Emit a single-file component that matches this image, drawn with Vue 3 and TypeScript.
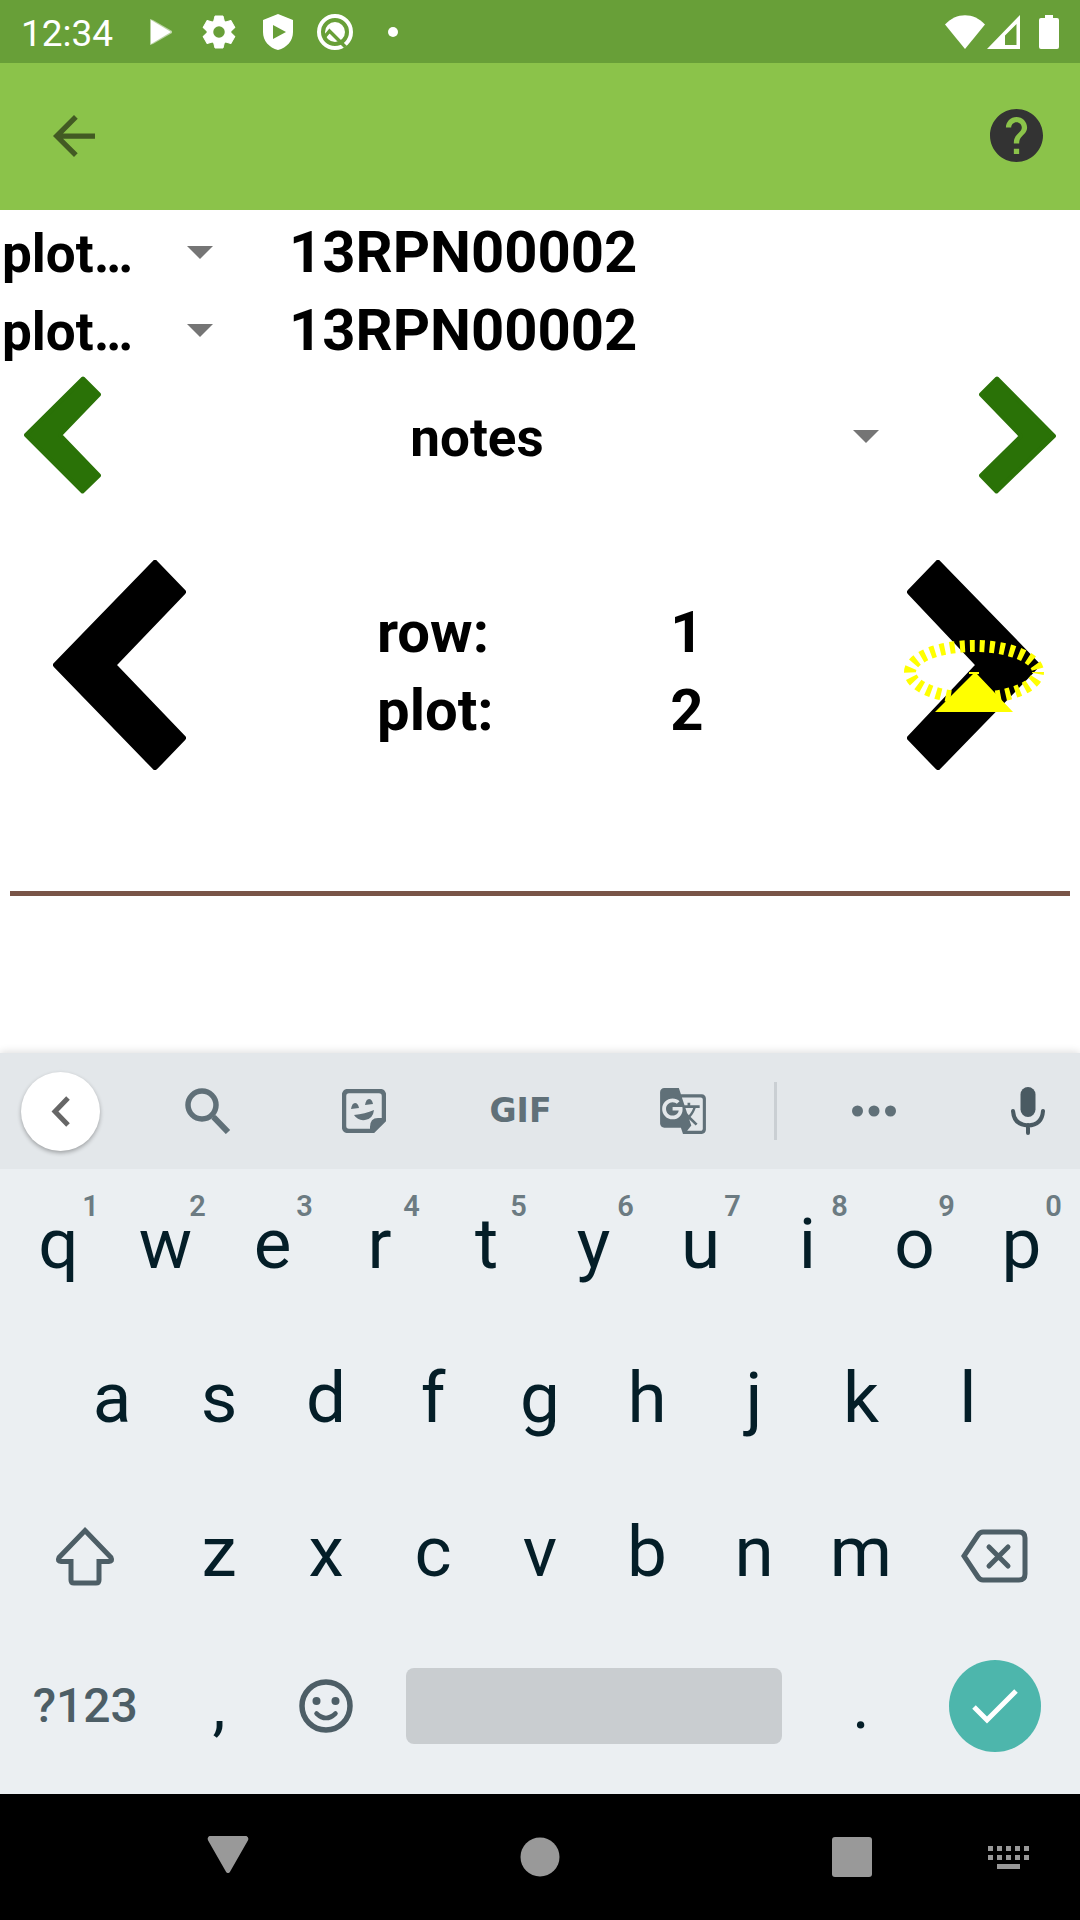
<script setup lang="ts">
import { ref } from 'vue'

interface Key {
  label: string
  hint?: string
}

const topRow: Key[] = 'qwertyuiop'.split('').map((label, i) => ({ label, hint: String((i + 1) % 10) }))
const homeRow: string[] = 'asdfghjkl'.split('')
const bottomRow: string[] = 'zxcvbnm'.split('')

const infoFields = [
  { id: 'info-first', value: '13RPN00002' },
  { id: 'info-second', value: '13RPN00002' },
]

const position = [
  { name: 'row:', value: '1' },
  { name: 'plot:', value: '2' },
]

const note = ref('')
</script>

<template>
  <div class="screen">
    <header class="status">
      <span class="clock">12:34</span>
      <svg class="s-play" width="24" height="28" viewBox="0 0 24 28"><path d="M1 1v26l3-1L23 15v-2L4 2z" fill="#b9d2a2" /><path d="M2 2v24L22 14z" fill="#fff" /></svg>
      <svg class="s-gear" width="34" height="34" viewBox="-17 -17 34 34">
        <circle r="9" fill="none" stroke="#fff" stroke-width="6.500" />
        <g fill="#fff" stroke="#fff" stroke-width="1" stroke-linejoin="round">
          <path v-for="turn in 6" :key="turn" :transform="`rotate(${turn * 60})`" d="M-4-16h8l1.500 6h-11z" />
        </g>
      </svg>
      <svg class="s-shield" width="30" height="36" viewBox="0 0 30 36"><path fill="#fff" fill-rule="evenodd" d="M15 0L30 6v12c0 9-6 15.500-15 18C6 33.500 0 27 0 18V6zM10 11v14l13-7z" /></svg>
      <svg class="s-beta" width="38" height="38" viewBox="0 0 38 38" fill="none">
        <circle cx="19" cy="19" r="16" stroke="#fff" stroke-width="4" />
        <circle cx="19" cy="19" r="10" fill="#fff" />
        <path d="M8.500 24l5-6 16 16" stroke="#689f38" stroke-width="3.500" />
      </svg>
      <svg class="s-dot" width="10" height="10" viewBox="0 0 10 10"><circle cx="5" cy="5" r="5" fill="#fff" /></svg>
      <svg class="s-wifi" width="40" height="34" viewBox="0 0 40 34"><path fill="#fff" d="M0 9.500C11-3 29-3 40 9.500L20 34z" /></svg>
      <svg class="s-signal" width="33" height="34" viewBox="0 0 33 34"><path fill="#fff" fill-rule="evenodd" d="M33 0v34H0zM29.500 9L18 20.500V30h11.500z" /></svg>
      <svg class="s-battery" width="20" height="34" viewBox="0 0 20 34"><path fill="#fff" d="M6 0h8v3h4q2 0 2 2v27q0 2-2 2H2q-2 0-2-2V5q0-2 2-2h4z" /></svg>
    </header>

    <nav class="appbar">
      <button class="plain" type="button" aria-label="Back">
        <svg width="42" height="42" viewBox="4 4 16 16"><path fill="#425a23" d="M20 11H7.830l5.590-5.590L12 4l-8 8 8 8 1.410-1.410L7.830 13H20z" /></svg>
      </button>
      <button class="plain" type="button" aria-label="Help">
        <svg width="53" height="53" viewBox="2 2 20 20"><path fill="#333" d="M12 2C6.480 2 2 6.480 2 12s4.480 10 10 10 10-4.480 10-10S17.520 2 12 2zm1 17h-2v-2h2v2zm2.070-7.750l-.9.920C13.450 12.900 13 13.500 13 15h-2v-.5c0-1.100.45-2.100 1.170-2.830l1.240-1.260c.37-.36.590-.86.590-1.410 0-1.100-.9-2-2-2s-2 .9-2 2H8c0-2.210 1.790-4 4-4s4 1.790 4 4c0 .88-.36 1.680-.93 2.250z" /></svg>
      </button>
    </nav>

    <main class="collect">
      <div v-for="field in infoFields" :key="field.id" class="info">
        <div class="spinner">
          <select :id="field.id" class="info-select" aria-label="Info field">
            <option>plot…</option>
          </select>
          <svg class="caret" width="26" height="13" viewBox="0 0 26 13"><path d="M0 0h26L13 13z" fill="#757575" /></svg>
        </div>
        <label class="info-value" :for="field.id">{{ field.value }}</label>
      </div>

      <div class="trait">
        <button class="plain" type="button" aria-label="Previous trait">
          <svg width="77" height="118" viewBox="0 0 77 118"><path fill="#2a7207" stroke="#2a7207" stroke-width="4" stroke-linejoin="round" d="M59 2.500L75 18.500 36 59l39 40.500L58.500 115.500 2 59z" /></svg>
        </button>
        <div class="spinner trait-spinner">
          <select class="trait-select" aria-label="Trait">
            <option>notes</option>
          </select>
          <svg class="caret" width="26" height="13" viewBox="0 0 26 13"><path d="M0 0h26L13 13z" fill="#757575" /></svg>
        </div>
        <button class="plain" type="button" aria-label="Next trait">
          <svg width="77" height="118" viewBox="0 0 77 118"><path fill="#2a7207" stroke="#2a7207" stroke-width="4" stroke-linejoin="round" d="M18 2.500L2 18.500 42 60 2 99.500 17.500 115.500 75 60z" /></svg>
        </button>
      </div>

      <div class="plot-nav">
        <button class="plain" type="button" aria-label="Previous plot">
          <svg width="133" height="210" viewBox="0 0 133 210"><path stroke="#000" stroke-width="6" stroke-linejoin="round" d="M102 3L130 32 60 105l70 73-28 29L3 105z" /></svg>
        </button>
        <dl class="position">
          <template v-for="item in position" :key="item.name">
            <dt>{{ item.name }}</dt>
            <dd>{{ item.value }}</dd>
          </template>
        </dl>
        <button class="plain next" type="button" aria-label="Next plot">
          <svg width="133" height="210" viewBox="0 0 133 210"><path stroke="#000" stroke-width="6" stroke-linejoin="round" d="M31 3L3 32 72 105 3 178l28 29 99-102z" /></svg>
          <svg class="marker" width="140" height="74" viewBox="0 0 140 74">
            <ellipse cx="70" cy="32" rx="64" ry="26" fill="none" stroke="#ff0" stroke-width="12" stroke-dasharray="5 5" stroke-dashoffset="3" />
            <path fill="#ff0" d="M65 32h10v2h-2l36 38H31l38-38h-4z" />
          </svg>
        </button>
      </div>

      <input v-model="note" class="note" type="text" aria-label="Notes" />
    </main>

    <section class="keyboard" aria-label="Keyboard">
      <div class="tools">
        <button class="plain collapse" type="button" aria-label="Collapse">
          <svg width="19" height="31" viewBox="0 0 19 31"><path d="M17 2L4 15.500 17 29" fill="none" stroke="#666" stroke-width="5" /></svg>
        </button>
        <button class="plain" type="button" aria-label="Search">
          <svg width="46" height="46" viewBox="0 0 46 46" fill="none" stroke="#607078"><circle cx="17" cy="17" r="14" stroke-width="5.500" /><path d="M28 28l1.500 0M28.500 29L43 44" stroke-width="6" /></svg>
        </button>
        <button class="plain" type="button" aria-label="Stickers">
          <svg width="44" height="44" viewBox="0 0 44 44">
            <path d="M7 2h30q5 0 5 5v24L31 42H7q-5 0-5-5V7q0-5 5-5z" fill="none" stroke="#607078" stroke-width="4.500" />
            <path fill="#607078" d="M28 43V38q0-9 8-9h7L31 43zM9 20q1-6 4-6t4 5zM23 16q1-6 4-6t4 5zM12 26q11-1 20-5-1 9-9 10-7 1-11-5z" />
          </svg>
        </button>
        <button class="plain gif" type="button">GIF</button>
        <button class="plain" type="button" aria-label="Translate">
          <svg width="50" height="50" viewBox="0 0 24 24"><path fill="#607078" d="M21 4H11l-1-3H3c-1.100 0-2 .9-2 2v15c0 1.100.9 2 2 2h8l1 3h9c1.100 0 2-.9 2-2V6c0-1.100-.9-2-2-2zM7 16c-2.760 0-5-2.240-5-5s2.240-5 5-5c1.350 0 2.480.5 3.350 1.300L9.030 8.570c-.38-.36-1.040-.78-2.030-.78-1.740 0-3.150 1.440-3.150 3.210S5.260 14.210 7 14.210c2.010 0 2.840-1.440 2.920-2.410H7v-1.710h4.680c.07.310.12.610.12 1.020C11.800 13.970 9.890 16 7 16zm6.170-5.420h3.700c-.43 1.250-1.110 2.430-2.050 3.470-.31-.35-.6-.72-.86-1.100l-.79-2.370zm8.330 9.920c0 .55-.45 1-1 1H14l2-2.500-1.040-3.100 3.100 3.100.92-.92-3.300-3.250.02-.02c1.130-1.250 1.930-2.690 2.400-4.220H20v-1.300h-4.530V8h-1.290v1.290h-1.440L11.460 5.500h9.040c.55 0 1 .45 1 1v14z" /></svg>
        </button>
        <span class="divider"></span>
        <button class="plain" type="button" aria-label="More">
          <svg width="44" height="12" viewBox="0 0 44 12" fill="#607078"><circle cx="5.500" cy="6" r="5.500" /><circle cx="22" cy="6" r="5.500" /><circle cx="38.500" cy="6" r="5.500" /></svg>
        </button>
        <button class="plain mic" type="button" aria-label="Voice input">
          <svg width="34" height="48" viewBox="0 0 34 48"><rect x="9.500" y="0" width="15" height="30" rx="7.500" fill="#4a5a62" /><path d="M2 24q1 14 15 14.500Q31 38 32 24M17 38v8" fill="none" stroke="#4a5a62" stroke-width="4" stroke-linecap="round" /></svg>
        </button>
      </div>

      <div class="keys">
        <div class="key-row">
          <button v-for="key in topRow" :key="key.label" class="plain key" type="button">{{ key.label }}<span class="hint">{{ key.hint }}</span></button>
        </div>
        <div class="key-row home">
          <button v-for="label in homeRow" :key="label" class="plain key" type="button">{{ label }}</button>
        </div>
        <div class="key-row">
          <button class="plain key wide" type="button" aria-label="Shift">
            <svg class="drop" width="60" height="60" viewBox="0 0 60 60"><path d="M30 4.500L56 31.500q2 4-2 4H44V54q0 3-3 3H19q-3 0-3-3V35.500H6q-4 0-2-4z" fill="none" stroke="#4d5e66" stroke-width="5" /></svg>
          </button>
          <button v-for="label in bottomRow" :key="label" class="plain key" type="button">{{ label }}</button>
          <button class="plain key wide" type="button" aria-label="Delete">
            <svg class="drop" width="67" height="54" viewBox="0 0 67 54" fill="none" stroke="#4d5e66" stroke-width="5"><path d="M22 3h36q6 0 6 6v36q0 6-6 6H22q-3 0-5-3L3 27 17 6q2-3 5-3z" /><path d="M28 18l19 19M47 18L28 37" stroke-linecap="round" /></svg>
          </button>
        </div>
        <div class="key-row">
          <button class="plain key wide symbols" type="button">?123</button>
          <button class="plain key mark" type="button">,</button>
          <button class="plain key" type="button" aria-label="Emoji">
            <svg width="54" height="54" viewBox="0 0 54 54"><circle cx="27" cy="27" r="24" fill="none" stroke="#4d5e66" stroke-width="5.500" /><circle cx="17.500" cy="22" r="4" fill="#4d5e66" /><circle cx="36.500" cy="22" r="4" fill="#4d5e66" /><path d="M17.500 34.500q9.500 9 19 0" fill="none" stroke="#4d5e66" stroke-width="4.500" stroke-linecap="round" /></svg>
          </button>
          <div class="space-slot"><button class="plain space" type="button" aria-label="Space"></button></div>
          <button class="plain key mark" type="button">.</button>
          <button class="plain key wide" type="button" aria-label="Done">
            <span class="done"><svg width="46" height="36" viewBox="0 0 46 36"><path d="M2 19l13 13L44 3" fill="none" stroke="#fff" stroke-width="5" /></svg></span>
          </button>
        </div>
      </div>
    </section>

    <footer class="sysnav">
      <button class="plain back" type="button" aria-label="Hide keyboard"><svg width="42" height="38" viewBox="0 0 42 38"><path d="M3 2h36q2 1 1 3L22 36.500q-1 1-2 0L2 5Q1 3 3 2z" fill="#999" stroke="#999" stroke-width="2" stroke-linejoin="round" /></svg></button>
      <button class="plain home-btn" type="button" aria-label="Home"><svg width="40" height="40" viewBox="0 0 40 40"><circle cx="20" cy="20" r="19.500" fill="#999" /></svg></button>
      <button class="plain recents" type="button" aria-label="Recents"><svg width="40" height="40" viewBox="0 0 40 40"><rect width="40" height="40" rx="3" fill="#999" /></svg></button>
      <button class="plain ime" type="button" aria-label="Switch keyboard"><svg width="41" height="23" viewBox="0 0 41 23" fill="#999"><path d="M0 0h5v5H0zM9 0h5v5H9zM18 0h5v5h-5zM27 0h5v5h-5zM36 0h5v5h-5zM0 9h5v5H0zM9 9h5v5H9zM18 9h5v5h-5zM27 9h5v5h-5zM36 9h5v5h-5zM9 18h23v5H9z" /></svg></button>
    </footer>
  </div>
</template>

<style>
body {
  background: #fff;
}
</style>

<style scoped>
.screen {
  display: flex;
  flex-direction: column;
  min-height: 100vh;
  font-family: Roboto, "Liberation Sans", sans-serif;
  color: #000;
}
svg {
  display: block;
  flex: none;
}
.plain {
  display: flex;
  align-items: center;
  justify-content: center;
  margin: 0;
  padding: 0;
  border: 0;
  background: none;
  font-family: inherit;
  color: inherit;
}

/* System status bar */
.status {
  display: flex;
  align-items: center;
  height: 63px;
  padding: 0 21px;
  background: #689f38;
  color: #fff;
}
.clock {
  font-size: 37px;
  line-height: 63px;
  padding-top: 3px;
}
.s-play { margin-left: 36px; }
.s-gear { margin-left: 29px; }
.s-shield { margin-left: 27px; }
.s-beta { margin-left: 23px; }
.s-dot { margin-left: 34px; }
.s-wifi { margin-left: auto; }
.s-signal { margin-left: 2px; }
.s-battery { margin-left: 19px; }

.appbar {
  display: flex;
  align-items: center;
  justify-content: space-between;
  height: 147px;
  padding: 0 37px 2px 53px;
  box-sizing: border-box;
  background: #8bc34a;
}

/* Data collection area */
.collect {
  flex: 1;
  padding-top: 3px;
  font-weight: 700;
}
.info {
  display: flex;
  align-items: baseline;
  height: 78px;
}
.spinner {
  position: relative;
}
.info .spinner {
  width: 289px;
}
.caret {
  position: absolute;
  pointer-events: none;
}
select {
  appearance: none;
  display: block;
  width: 100%;
  margin: 0;
  padding: 0;
  border: 0;
  background: none;
  font: 700 53px/78px Roboto, "Liberation Sans", sans-serif;
  color: #000;
}
.info-select {
  padding-left: 2px;
}
.info .caret {
  top: 31px;
  left: 187px;
}
.info-value {
  font-size: 58px;
  line-height: 78px;
}
.trait {
  display: flex;
  align-items: center;
  height: 132px;
  padding: 0 24px;
}
.trait-spinner {
  flex: 1;
  margin: 0 25px;
}
.trait-select {
  padding: 5px 126px 0 0;
  text-align-last: center;
}
.trait-spinner .caret {
  top: 36px;
  right: 75px;
}
.plot-nav {
  display: flex;
  align-items: center;
  padding: 59px 40px 25px 53px;
}
.position {
  flex: 1;
  display: grid;
  grid-template-columns: 291fr 235fr;
  margin: 0;
  padding: 12px 0 0 191px;
  font-size: 58px;
  line-height: 78px;
}
.position dd {
  margin: 0;
}
.next {
  position: relative;
}
.marker {
  position: absolute;
  top: 80px;
  left: -3px;
}
.note {
  display: block;
  box-sizing: border-box;
  width: calc(100% - 20px);
  height: 101px;
  margin: 0 10px;
  padding: 0;
  border: 0;
  border-bottom: 5px solid #795548;
  outline: 0;
  background: none;
  font: 400 52px/78px Roboto, "Liberation Sans", sans-serif;
}

/* On-screen keyboard */
.keyboard {
  background: #ebeff2;
  box-shadow: 0 -1px 8px rgba(0, 0, 0, 0.14);
}
.tools {
  display: grid;
  grid-template-columns: 130fr 156fr 156fr 157fr 167fr 19fr 178fr 117fr;
  align-items: center;
  height: 116px;
  background: #e3e7ea;
}
.collapse {
  width: 79px;
  height: 79px;
  margin-left: 21px;
  padding-right: 1px;
  border-radius: 50%;
  background: #fff;
  box-shadow: 0 2px 4px rgba(0, 0, 0, 0.3);
}
.gif {
  font: 700 33px/40px "DejaVu Sans", sans-serif;
  color: #607078;
}
.divider {
  width: 3px;
  height: 58px;
  margin: 0 auto;
  background: #cacfd3;
}
.mic {
  padding-left: 12px;
}
.keys {
  padding-bottom: 9px;
}
.key-row {
  display: flex;
  height: 154px;
  padding: 0 5px;
}
.home::before,
.home::after {
  content: "";
  flex: 1 1 0;
}
.key {
  position: relative;
  flex: 2 1 0;
  min-width: 0;
  padding-bottom: 4px;
  font-size: 71px;
  line-height: 84px;
  color: #041e28;
}
.wide {
  flex-grow: 3;
}
.hint {
  position: absolute;
  top: 20px;
  left: 50%;
  width: 64px;
  text-align: center;
  font-size: 29px;
  font-weight: 600;
  line-height: 34px;
  color: #6c7b82;
}
.drop {
  margin-top: 8px;
}
.symbols {
  font-size: 48px;
  font-weight: 500;
  color: #4d5e66;
}
.mark {
  font-size: 66px;
}
.space-slot {
  flex: 8 1 0;
  display: flex;
  align-items: center;
  min-width: 0;
}
.space {
  flex: 1;
  height: 76px;
  margin: 0 26px 4px;
  border-radius: 8px;
  background: #c9cdd0;
}
.done {
  display: flex;
  align-items: center;
  justify-content: center;
  width: 92px;
  height: 92px;
  border-radius: 50%;
  background: #4db6ac;
}

/* System navigation */
.sysnav {
  display: grid;
  grid-template-columns: 108fr 240fr 72fr 240fr 72fr 240fr 72fr 36fr;
  height: 126px;
  background: #000;
}
.back { grid-column: 2; padding-bottom: 6px; }
.home-btn { grid-column: 4; }
.recents { grid-column: 6; }
.ime { grid-column: 7; }
</style>
